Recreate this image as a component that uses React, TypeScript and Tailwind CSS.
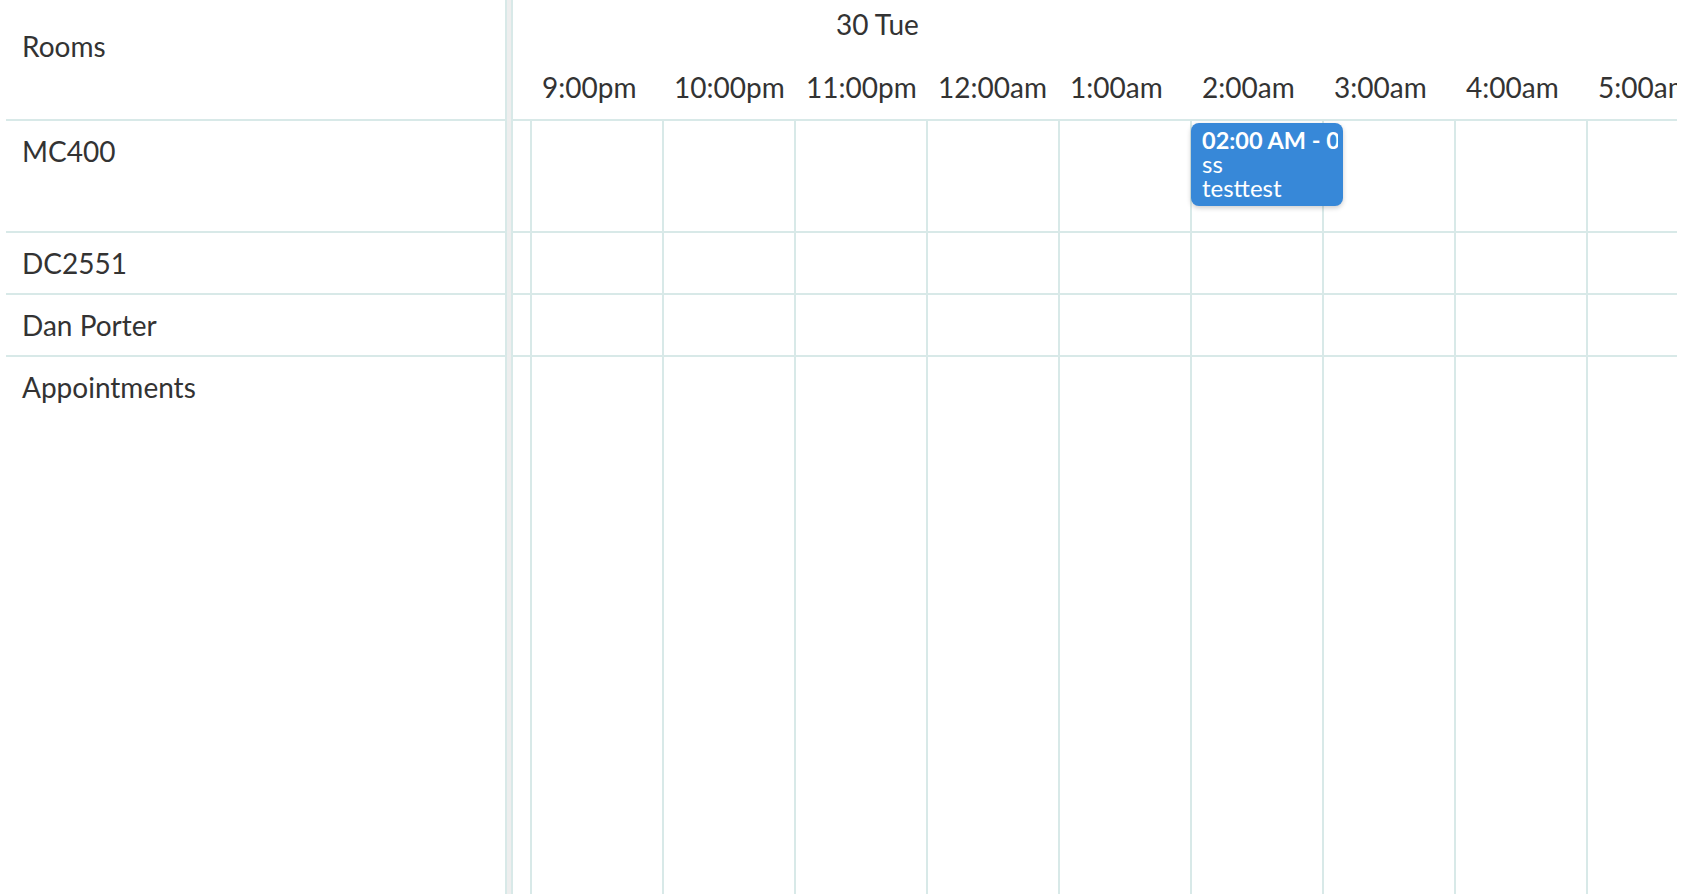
import React from "react";

const times = ["9:00pm", "10:00pm", "11:00pm", "12:00am", "1:00am", "2:00am", "3:00am", "4:00am", "5:00am"];
const rows = [
  { name: "MC400", h: "h-[112px] border-b-2" },
  { name: "DC2551", h: "h-[62px] border-b-2" },
  { name: "Dan Porter", h: "h-[62px] border-b-2" },
  { name: "Appointments", h: "flex-1" },
];

function Slots() {
  return (
    <div className="flex h-full">
      <div className="w-[17px] shrink-0" />
      {times.map((t) => (
        <div key={t} className="w-[132px] shrink-0 h-full border-l-2 border-[#d8e9e8]" />
      ))}
    </div>
  );
}

export default function App() {
  return (
    <div
      className="flex h-[894px] w-full pl-[6px] pr-[9px] bg-white overflow-hidden text-[#333333]"
      style={{ fontFamily: "Lato, 'Open Sans', sans-serif" }}
    >
      {/* left pane */}
      <div className="w-[499px] shrink-0 flex flex-col text-[28px] leading-[34px]">
        <div className="h-[121px] shrink-0 border-b-2 border-[#d8e9e8] pl-[16px] pt-[29px]">Rooms</div>
        {rows.map((r) => (
          <div key={r.name} className={`${r.h} shrink-0 border-[#d8e9e8] pl-[16px] pt-[13px]`}>
            {r.name}
          </div>
        ))}
      </div>

      {/* divider */}
      <div className="w-[8px] shrink-0 border-x-2 border-[#d8e9e8] bg-[#eeeeee]" />

      {/* right pane */}
      <div className="flex-1 min-w-0 overflow-hidden flex flex-col">
        <div className="h-[121px] shrink-0 border-b-2 border-[#d8e9e8] text-[28px] leading-[34px]">
          <div className="pt-[7px] pl-[323px] whitespace-nowrap">30 Tue</div>
          <div className="flex mt-[29px] whitespace-nowrap">
            <div className="w-[17px] shrink-0" />
            {times.map((t) => (
              <div key={t} className="w-[132px] shrink-0 pl-[12px]">
                {t}
              </div>
            ))}
          </div>
        </div>
        {rows.map((r, i) => (
          <div key={r.name} className={`${r.h} shrink-0 border-[#d8e9e8] relative`}>
            <Slots />
            {i === 0 && (
              <div className="absolute top-[2px] left-[678px] w-[152px] h-[83px] rounded-[8px] bg-[#3788d8] text-white pl-[11px] pt-[5px] pr-[5px] shadow-[0_2px_5px_rgba(0,0,0,0.2)] text-[24px] leading-[24px]">
                <div className="font-bold text-[23.5px] whitespace-nowrap overflow-hidden">02:00 AM - 03:00 AM</div>
                <div>ss</div>
                <div>testtest</div>
              </div>
            )}
          </div>
        ))}
      </div>
    </div>
  );
}
